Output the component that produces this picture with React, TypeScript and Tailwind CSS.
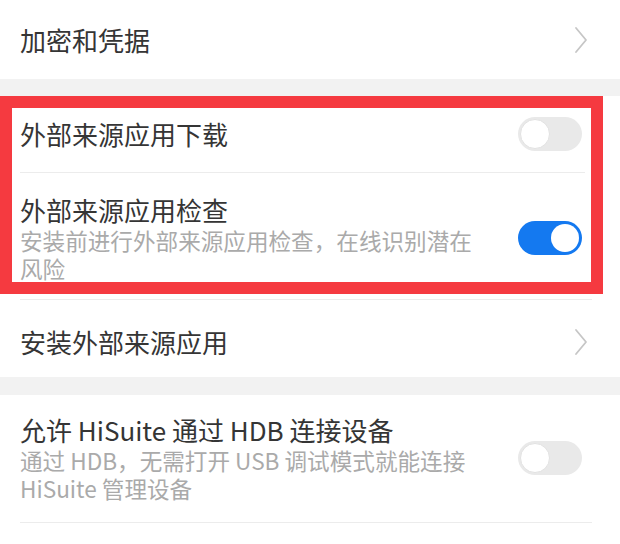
const font = { fontFamily: '"Noto Sans CJK SC", "Noto Sans", sans-serif' };

function Chevron() {
  return (
    <svg width="14" height="28" viewBox="0 0 14 28" fill="none">
      <path d="M2 2 L12 14 L2 26" stroke="#c6c6c6" strokeWidth="1.8" strokeLinecap="round" strokeLinejoin="round" />
    </svg>
  );
}

function Toggle({ on }: { on: boolean }) {
  if (on) {
    return (
      <div className="flex h-[34px] w-[64px] shrink-0 items-center justify-end rounded-full bg-[#1479f0] px-[3px]">
        <div className="size-[28px] rounded-full bg-white" />
      </div>
    );
  }
  return (
    <div className="flex h-[34px] w-[64px] shrink-0 items-center rounded-full bg-[#e9e9e9] px-[2px]">
      <div className="size-[30px] rounded-full border border-[#e2e2e2] bg-white" />
    </div>
  );
}

function Divider({ right }: { right: string }) {
  return <div className={`ml-[20px] h-px bg-[#ececec] ${right}`} />;
}

export default function App() {
  return (
    <main className="relative h-[544px] w-[620px] overflow-hidden bg-white" style={font}>
      <div className="flex h-[79px] items-center justify-between pl-[20px] pr-[32px]">
        <span className="text-[26px] leading-[34px] text-[#353535]">加密和凭据</span>
        <Chevron />
      </div>
      <div className="h-[17px] bg-[#f2f2f2]" />

      <div className="flex h-[76px] items-center justify-between pl-[20px] pr-[38px]">
        <span className="text-[26px] leading-[34px] text-[#353535]">外部来源应用下载</span>
        <Toggle on={false} />
      </div>
      <Divider right="mr-[35px]" />
      <div className="flex items-center justify-between pb-[16px] pl-[20px] pr-[38px] pt-[20px]">
        <div className="flex flex-col">
          <span className="text-[26px] leading-[34px] text-[#353535]">外部来源应用检查</span>
          <span className="text-[22.6px] leading-[28px] text-[#aaaaaa]">
            安装前进行外部来源应用检查，在线识别潜在
            <br />
            风险
          </span>
        </div>
        <Toggle on={true} />
      </div>
      <Divider right="mr-[28px]" />

      <div className="flex h-[77px] items-center justify-between pl-[20px] pr-[32px] pt-[6px]">
        <span className="text-[26px] leading-[34px] text-[#353535]">安装外部来源应用</span>
        <Chevron />
      </div>
      <div className="h-[18px] bg-[#f2f2f2]" />

      <div className="flex items-center justify-between pb-[19px] pl-[20px] pr-[38px] pt-[18px]">
        <div className="flex flex-col">
          <span className="text-[26px] leading-[34px] text-[#353535]">允许 HiSuite 通过 HDB 连接设备</span>
          <span className="text-[22.6px] leading-[28px] text-[#aaaaaa]">
            通过 HDB，无需打开 USB 调试模式就能连接
            <br />
            HiSuite 管理设备
          </span>
        </div>
        <Toggle on={false} />
      </div>
      <Divider right="mr-[28px]" />

      {/* red highlight annotation */}
      <div className="pointer-events-none absolute left-0 top-[96px] h-[198px] w-[603px] border-[12px] border-[#f53a40]" />
    </main>
  );
}
